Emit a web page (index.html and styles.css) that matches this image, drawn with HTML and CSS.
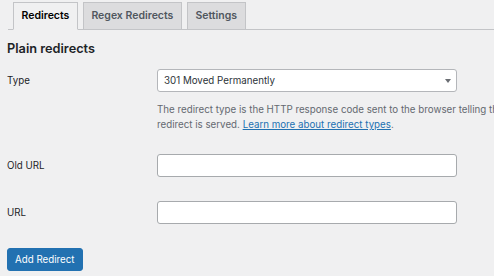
FILE: index.html
```html
<!DOCTYPE html>
<html lang="en">
<head>
    <meta charset="UTF-8">
    <meta name="viewport" content="width=device-width, initial-scale=1.0">
    <title>Redirects</title>
    <link rel="stylesheet" href="styles.css">
</head>
<body>

<!-- tabs -->
<nav class="nav-tab-wrapper">
    <a href="#" class="nav-tab nav-tab-active">Redirects</a>
    <a href="#" class="nav-tab">Regex Redirects</a>
    <a href="#" class="nav-tab">Settings</a>
</nav>

<div class="content">
    <h2 class="section-title">Plain redirects</h2>

    <form class="redirect-form">
        <div class="form-row form-row-type">
            <label class="form-label" for="redirectType">Type</label>
            <div class="form-field">
                <span class="select-wrap">
                    <select id="redirectType" class="form-select">
                        <option>301 Moved Permanently</option>
                        <option>302 Found</option>
                        <option>307 Temporary Redirect</option>
                    </select>
                    <svg class="select-arrow" width="6" height="4" viewBox="0 0 6 4"><path d="M0 0h6L3 4z" fill="#6b6e73"/></svg>
                </span>
                <p class="description">The redirect type is the HTTP response code sent to the browser telling the browser how the<br>redirect is served. <a href="#">Learn more about redirect types</a>.</p>
            </div>
        </div>

        <div class="form-row">
            <label class="form-label" for="oldUrl">Old URL</label>
            <div class="form-field">
                <input type="text" id="oldUrl" class="form-input">
            </div>
        </div>

        <div class="form-row">
            <label class="form-label" for="newUrl">URL</label>
            <div class="form-field">
                <input type="text" id="newUrl" class="form-input">
            </div>
        </div>

        <div class="form-submit">
            <button type="button" class="button-primary">Add Redirect</button>
        </div>
    </form>
</div>

</body>
</html>
```

FILE: styles.css
```css
html,
body {
    overflow: hidden;
}

body {
    font-family: Inter, "Liberation Sans", sans-serif;
    font-size: 9.75px;
    color: #1d2327;
    background-color: #f0f0f1;
    margin: 0;
}

/* tabs */
.nav-tab-wrapper {
    display: flex;
    margin-left: 8px;
    padding-top: 2px;
    border-bottom: 1px solid #c3c4c7;
}

.nav-tab {
    display: block;
    margin-left: 5px;
    margin-bottom: -1px;
    padding: 4px 7.5px;
    border: 1px solid #c3c4c7;
    background-color: #dcdcde;
    color: #50575e;
    font-size: 10.5px;
    font-weight: 600;
    line-height: 18px;
    text-decoration: none;
}

.nav-tab-active {
    background-color: #f0f0f1;
    border-bottom-color: #f0f0f1;
    color: #000;
}

.content {
    padding-left: 7px;
}

.section-title {
    margin: 11px 0 0;
    font-size: 12.75px;
    font-weight: 600;
    line-height: 16px;
    color: #1d2327;
}

/* form rows */
.form-row {
    display: grid;
    grid-template-columns: 150px 1fr;
    padding: 12px 0;
}

.form-row-type {
    padding-bottom: 10px;
}

.form-label {
    height: 23px;
    display: flex;
    align-items: center;
    color: #1d2327;
}

.form-field {
    min-width: 0;
}

.select-wrap {
    position: relative;
    display: block;
    width: 300px;
}

.form-select,
.form-input {
    display: block;
    box-sizing: border-box;
    width: 300px;
    height: 23px;
    margin: 0;
    border: 1px solid #8c8f94;
    border-radius: 3px;
    background-color: #fff;
    font-family: inherit;
    font-size: 9.75px;
    color: #2c3338;
}

.form-select {
    appearance: none;
    -webkit-appearance: none;
    padding: 0 20px 0 6px;
    border-color: #b4b6ba;
}

.form-input {
    padding: 0 6px;
    border-color: #a7aaad;
}

.select-arrow {
    position: absolute;
    right: 6px;
    top: 10px;
}

.description {
    margin: 10px 0 0;
    width: 600px;
    line-height: 15px;
    color: #646970;
    white-space: nowrap;
}

.description a {
    color: #2271b1;
}

.form-submit {
    padding-top: 12px;
}

.button-primary {
    height: 23px;
    margin-left: 0;
    padding: 0 7px;
    border: 1px solid #2271b1;
    border-radius: 3px;
    background-color: #2271b1;
    color: #fff;
    font-family: inherit;
    font-size: 9.75px;
    cursor: pointer;
}
```
